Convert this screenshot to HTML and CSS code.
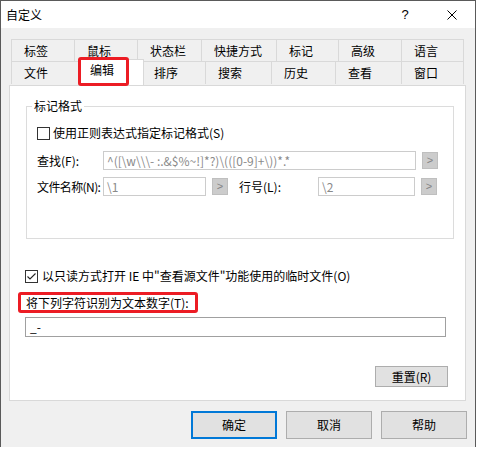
FILE: index.html
```html
<!DOCTYPE html>
<html lang="zh-CN">
<head>
<meta charset="utf-8">
<title>自定义</title>
<link rel="stylesheet" href="styles.css">
</head>
<body>
<div class="window">
  <div class="titlebar">
    <span class="title">自定义</span>
    <span class="help">?</span>
    <svg class="close" width="10" height="10" viewBox="0 0 10 10"><path d="M0.5 0.5L9.5 9.5M9.5 0.5L0.5 9.5" stroke="#000" stroke-width="1" fill="none"/></svg>
  </div>
  <div class="content">
    <div class="tabs">
      <div class="tab-row row1">
        <div class="tab">标签</div>
        <div class="tab">鼠标</div>
        <div class="tab">状态栏</div>
        <div class="tab">快捷方式</div>
        <div class="tab">标记</div>
        <div class="tab">高级</div>
        <div class="tab">语言</div>
      </div>
      <div class="tab-row row2">
        <div class="tab">文件</div>
        <div class="tab active">编辑<span class="mark mark-tab"></span></div>
        <div class="tab">排序</div>
        <div class="tab">搜索</div>
        <div class="tab">历史</div>
        <div class="tab">查看</div>
        <div class="tab">窗口</div>
      </div>
    </div>
    <div class="panel">
      <fieldset class="group">
        <legend>标记格式</legend>
        <div class="check-row first">
          <span class="checkbox"></span>
          <span class="check-label">使用正则表达式指定标记格式(S)</span>
        </div>
        <div class="field-row find-row">
          <span class="field-label">查找(F):</span>
          <span class="input disabled wide">^([\w\\\- :.&amp;$%~!]*?)\(([0-9]+\))*.*</span>
          <span class="arrow-btn">&gt;</span>
        </div>
        <div class="field-row name-row">
          <span class="field-label tight">文件名称(N):</span>
          <span class="input disabled short">\1</span>
          <span class="arrow-btn">&gt;</span>
          <span class="field-label line-label">行号(L):</span>
          <span class="input disabled line">\2</span>
          <span class="arrow-btn">&gt;</span>
        </div>
      </fieldset>
      <div class="check-row readonly-row">
        <span class="checkbox checked"><svg width="11" height="11" viewBox="0 0 11 11"><path d="M1.5 5.5L4 8L9.5 2.5" stroke="#222" stroke-width="1.1" fill="none"/></svg></span>
        <span class="check-label">以只读方式打开 IE 中"查看源文件"功能使用的临时文件(O)</span>
      </div>
      <div class="text-label">将下列字符识别为文本数字(T):<span class="mark mark-label"></span></div>
      <div class="input text-input">_-</div>
      <div class="button reset">重置(R)</div>
    </div>
    <div class="dialog-buttons">
      <div class="button default">确定</div>
      <div class="button">取消</div>
      <div class="button">帮助</div>
    </div>
  </div>
</div>
</body>
</html>
```

FILE: styles.css
```css
body {
  margin: 0;
  background: #fff;
  font-family: "Noto Sans CJK SC", "Noto Sans", sans-serif;
  font-size: 12px;
  color: #000;
}

.window {
  width: 476px;
  height: 447px;
  box-sizing: border-box;
  border: 1px solid #5a5a5a;
  border-bottom: none;
  background: #f0f0f0;
  display: flex;
  flex-direction: column;
}

.titlebar {
  height: 27px;
  flex: none;
  background: #fff;
  display: flex;
  align-items: center;
}

.title {
  margin-left: 5px;
  line-height: 16px;
}

.help {
  margin-left: auto;
  width: 10px;
  text-align: center;
  line-height: 16px;
  font-family: "Liberation Sans", sans-serif;
  font-size: 13px;
}

.close {
  margin-left: 37px;
  margin-right: 18px;
}

.content {
  flex: 1;
  padding: 11px 8px 0 8px;
  display: flex;
  flex-direction: column;
}

.tabs {
  margin-left: 2px;
}

.tab-row {
  display: flex;
}

.tab {
  box-sizing: border-box;
  height: 22px;
  line-height: 22px;
  padding-left: 12px;
  border: 1px solid #d9d9d9;
  border-bottom: none;
  background: #f0f0f0;
  margin-left: -1px;
  white-space: nowrap;
}

.tab:first-child {
  margin-left: 0;
}

.row1 .tab:nth-child(1) { width: 64px; }
.row1 .tab:nth-child(2) { width: 64px; }
.row1 .tab:nth-child(3) { width: 65px; }
.row1 .tab:nth-child(4) { width: 76px; }
.row1 .tab:nth-child(5) { width: 63px; }
.row1 .tab:nth-child(6) { width: 64px; }
.row1 .tab:nth-child(7) { width: 63px; }

.row2 .tab {
  height: 23px;
  line-height: 21px;
}

.row2 .tab:nth-child(1) { width: 70px; }
.row2 .tab:nth-child(3) { width: 65px; }
.row2 .tab:nth-child(4) { width: 67px; }
.row2 .tab:nth-child(5) { width: 65px; }
.row2 .tab:nth-child(6) { width: 67px; }
.row2 .tab:nth-child(7) { width: 63px; }

.row2 .tab.active {
  position: relative;
  z-index: 1;
  width: 66px;
  height: 26px;
  line-height: 20px;
  margin-top: -2px;
  margin-left: -3px;
  margin-right: -2px;
  padding-left: 11px;
  background: #fff;
}

.mark {
  position: absolute;
  box-sizing: border-box;
  border: 3px solid #ec1c24;
  border-radius: 3px;
  pointer-events: none;
}

.mark-tab {
  left: -1px;
  top: -3px;
  width: 51px;
  height: 29px;
}

.panel {
  box-sizing: border-box;
  width: 457px;
  height: 316px;
  border: 1px solid #d9d9d9;
  background: #fff;
  display: flex;
  flex-direction: column;
}

.group {
  margin: 12px 11px 0 16px;
  border: 1px solid #dcdcdc;
  padding: 0 10px 42px 10px;
  min-width: 0;
}

.group legend {
  margin-left: -5px;
  padding: 0 2px;
  line-height: 16px;
}

.check-row {
  display: flex;
  align-items: center;
  height: 16px;
  line-height: 16px;
}

.check-row.first {
  margin-top: 11px;
}

.checkbox {
  box-sizing: border-box;
  width: 13px;
  height: 13px;
  border: 1px solid #333;
  background: #fff;
  flex: none;
  display: flex;
  align-items: center;
  justify-content: center;
}

.check-label {
  margin-left: 3px;
  white-space: nowrap;
}

.field-row {
  display: flex;
  align-items: center;
  height: 19px;
}

.find-row {
  margin-top: 10px;
}

.name-row {
  margin-top: 7px;
}

.field-label {
  width: 66px;
  flex: none;
  line-height: 16px;
  white-space: nowrap;
}

.field-label.tight {
  letter-spacing: -0.6px;
}

.line-label {
  width: 79px;
  margin-left: 11px;
}

.input {
  box-sizing: border-box;
  height: 19px;
  line-height: 17px;
  border: 1px solid #a0a0a0;
  background: #fff;
  padding-left: 3px;
  white-space: nowrap;
  overflow: hidden;
  flex: none;
}

.input.disabled {
  border-color: #cccccc;
  color: #8a8a8a;
}

.input.wide { width: 313px; }
.input.short { width: 103px; }
.input.line { width: 97px; }

.arrow-btn {
  box-sizing: border-box;
  width: 16px;
  height: 17px;
  margin-left: 6px;
  background: #cccccc;
  border: 1px solid #bfbfbf;
  color: #838383;
  font-family: "Liberation Sans", sans-serif;
  font-size: 11px;
  line-height: 15px;
  text-align: center;
  flex: none;
}

.readonly-row {
  margin-top: 29px;
  margin-left: 15px;
}

.readonly-row .check-label {
  margin-left: 4px;
}

.text-label {
  position: relative;
  margin-top: 11px;
  margin-left: 16px;
  line-height: 16px;
  align-self: flex-start;
  white-space: nowrap;
}

.mark-label {
  left: -8px;
  top: -3px;
  width: 180px;
  height: 21px;
}

.text-input {
  margin-top: 6px;
  margin-left: 15px;
  width: 421px;
  height: 20px;
  line-height: 18px;
  padding-left: 4px;
}

.button {
  box-sizing: border-box;
  background: #e1e1e1;
  border: 1px solid #adadad;
  text-align: center;
  white-space: nowrap;
}

.reset {
  align-self: flex-end;
  margin-top: 29px;
  margin-right: 17px;
  width: 73px;
  height: 21px;
  line-height: 19px;
}

.dialog-buttons {
  display: flex;
  justify-content: flex-end;
  gap: 9px;
  margin-top: 10px;
}

.dialog-buttons .button {
  width: 86px;
  height: 28px;
  line-height: 26px;
}

.dialog-buttons .button.default {
  border: 2px solid #0078d7;
  line-height: 24px;
}
```
